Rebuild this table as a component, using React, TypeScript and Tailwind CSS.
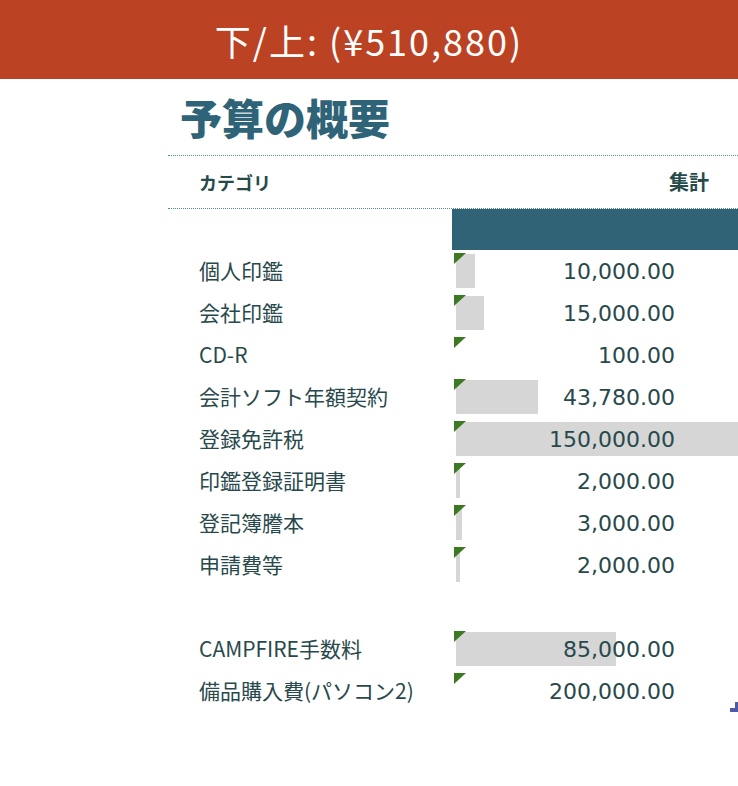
const rows: { label: string; value: number | null; bar: boolean }[] = [
  { label: "個人印鑑", value: 10000, bar: true },
  { label: "会社印鑑", value: 15000, bar: true },
  { label: "CD-R", value: 100, bar: true },
  { label: "会計ソフト年額契約", value: 43780, bar: true },
  { label: "登録免許税", value: 150000, bar: true },
  { label: "印鑑登録証明書", value: 2000, bar: true },
  { label: "登記簿謄本", value: 3000, bar: true },
  { label: "申請費等", value: 2000, bar: true },
  { label: "", value: null, bar: false },
  { label: "CAMPFIRE手数料", value: 85000, bar: true },
  { label: "備品購入費(パソコン2)", value: 200000, bar: false },
];

const MAX = 150000;
const BAR_W = 282;

const fmt = (n: number) =>
  n.toLocaleString("en-US", { minimumFractionDigits: 2, maximumFractionDigits: 2 });

const Flag = () => (
  <svg className="absolute left-[2px] top-[3px]" width="12" height="11" viewBox="0 0 12 11">
    <polygon points="0,0 12,0 0,11" fill="#3b7a22" />
  </svg>
);

export default function App() {
  return (
    <div className="w-[738px] h-[786px] bg-white relative overflow-hidden font-['Noto_Sans_CJK_JP',sans-serif]">
      <div className="h-[79px] bg-[#bb4223] flex items-center justify-center">
        <span className="text-white text-[36px] leading-none tracking-[2px] font-['Noto_Sans_CJK_JP',sans-serif]">
          下/上: (¥510,880)
        </span>
      </div>

      <div className="ml-[168px]">
        <div className="h-[76px] pl-3 pt-[9px]">
          <h1 className="text-[42px] leading-[58px] font-black text-[#2e6378]">予算の概要</h1>
        </div>

        <div className="h-[54px] border-y border-dotted border-[#4f8f8f] flex items-center justify-between pl-[31px] pr-[29px] font-bold text-[#264a4a]">
          <span className="text-[18px]">カテゴリ</span>
          <span className="text-[20px]">集計</span>
        </div>

        <div className="grid grid-cols-[284px_286px]">
          <div className="h-[41px]" />
          <div className="h-[41px] bg-[#2f6375]" />
          {rows.map((r, i) => (
            <div key={i} className="contents">
              <div className="h-[42px] pl-[31px] flex items-center text-[21px] text-[#28494b] whitespace-nowrap">
                {r.label}
              </div>
              <div className="h-[42px] relative">
                {r.value !== null && (
                  <>
                    {r.bar && (
                      <div
                        className="absolute left-[4px] top-[4px] h-[34px] bg-[#d6d6d6]"
                        style={{ width: Math.round((r.value / MAX) * BAR_W) }}
                      />
                    )}
                    <Flag />
                    <div className="relative h-full flex items-center justify-end pr-[63px] text-[22px] text-[#28494b] font-['DejaVu_Sans',sans-serif]">
                      {fmt(r.value)}
                    </div>
                  </>
                )}
              </div>
            </div>
          ))}
        </div>
      </div>

      <svg className="absolute left-[730px] top-[702px]" width="8" height="10" viewBox="0 0 8 10">
        <rect x="5" y="0" width="3" height="10" fill="#4b5ba8" />
        <rect x="0" y="6" width="8" height="4" fill="#4b5ba8" />
      </svg>
    </div>
  );
}
